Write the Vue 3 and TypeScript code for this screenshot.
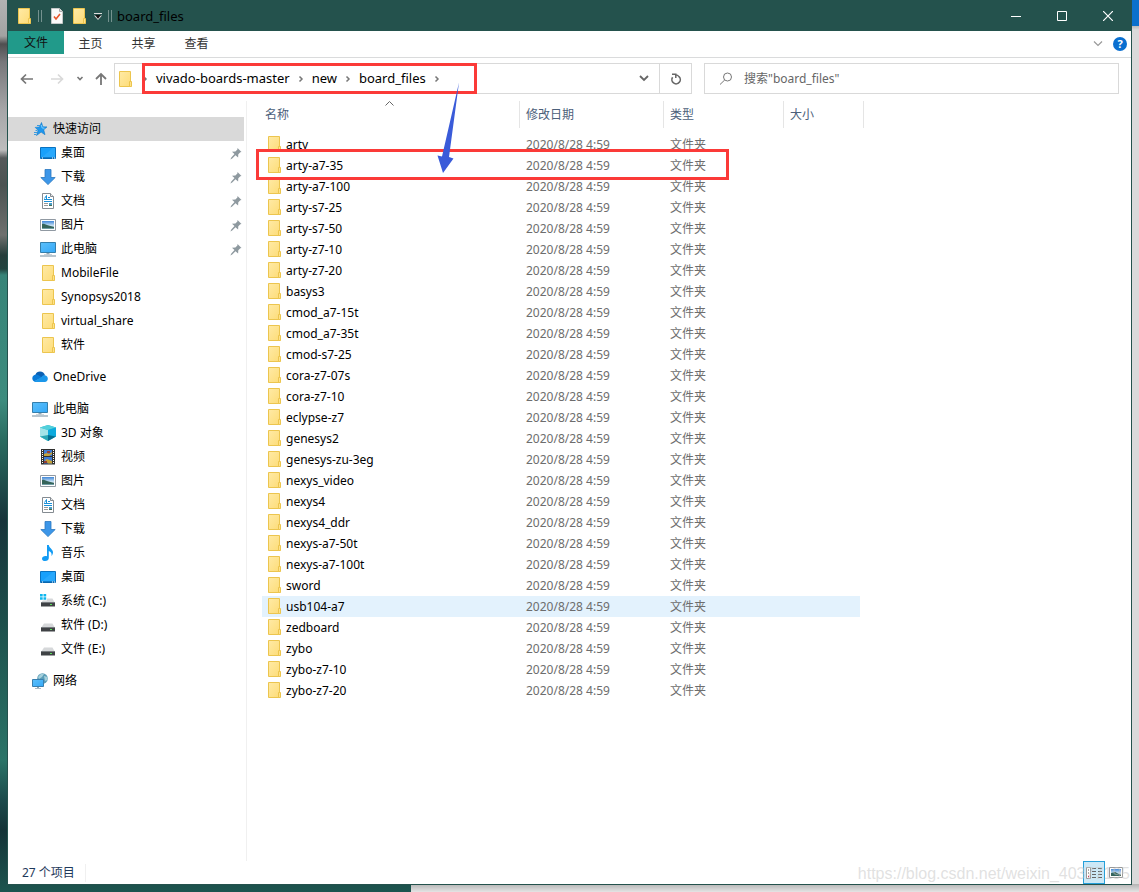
<script setup lang="ts">
import { ref } from 'vue'

interface NavItem {
  label: string
  icon: string
  root?: boolean
  pinned?: boolean
  active?: boolean
}

const navGroups: NavItem[][] = [
  [
    { label: '快速访问', icon: 'star', root: true, active: true },
    { label: '桌面', icon: 'desktop', pinned: true },
    { label: '下载', icon: 'download', pinned: true },
    { label: '文档', icon: 'document', pinned: true },
    { label: '图片', icon: 'picture', pinned: true },
    { label: '此电脑', icon: 'pc', pinned: true },
    { label: 'MobileFile', icon: 'folder' },
    { label: 'Synopsys2018', icon: 'folder' },
    { label: 'virtual_share', icon: 'folder' },
    { label: '软件', icon: 'folder' },
  ],
  [{ label: 'OneDrive', icon: 'cloud', root: true }],
  [
    { label: '此电脑', icon: 'pc', root: true },
    { label: '3D 对象', icon: 'cube' },
    { label: '视频', icon: 'video' },
    { label: '图片', icon: 'picture' },
    { label: '文档', icon: 'document' },
    { label: '下载', icon: 'download' },
    { label: '音乐', icon: 'music' },
    { label: '桌面', icon: 'desktop' },
    { label: '系统 (C:)', icon: 'sysdrive' },
    { label: '软件 (D:)', icon: 'drive' },
    { label: '文件 (E:)', icon: 'drive' },
  ],
  [{ label: '网络', icon: 'network', root: true }],
]

const folders: string[] = [
  'arty', 'arty-a7-35', 'arty-a7-100', 'arty-s7-25', 'arty-s7-50', 'arty-z7-10', 'arty-z7-20',
  'basys3', 'cmod_a7-15t', 'cmod_a7-35t', 'cmod-s7-25', 'cora-z7-07s', 'cora-z7-10', 'eclypse-z7',
  'genesys2', 'genesys-zu-3eg', 'nexys_video', 'nexys4', 'nexys4_ddr', 'nexys-a7-50t',
  'nexys-a7-100t', 'sword', 'usb104-a7', 'zedboard', 'zybo', 'zybo-z7-10', 'zybo-z7-20',
]
const hovered = ref('usb104-a7')
const crumbs = ['vivado-boards-master', 'new', 'board_files']
const query = ref('')
</script>

<template>
  <svg class="defs" aria-hidden="true">
    <defs>
      <linearGradient id="gFolder" x1="0" y1="0" x2="1" y2="1">
        <stop offset="0" stop-color="#ffeaa6" /><stop offset="1" stop-color="#fddc77" />
      </linearGradient>
      <linearGradient id="gBlue" x1="0" y1="0" x2="1" y2="1">
        <stop offset="0" stop-color="#5cc0fb" /><stop offset="1" stop-color="#35a8f7" />
      </linearGradient>
      <linearGradient id="gSky" x1="0" y1="0" x2="0" y2="1">
        <stop offset="0" stop-color="#3f86d8" /><stop offset="0.6" stop-color="#cfe6f5" /><stop offset="1" stop-color="#5d8f95" />
      </linearGradient>
      <symbol id="folder" viewBox="0 0 16 16">
        <path d="M2.500.500h11v12l.500 3H2.500z" fill="url(#gFolder)" stroke="#ecc54e" />
        <path d="M12.500 15.500v-5h2v5z" fill="#ffe28a" stroke="#ecc54e" />
      </symbol>
      <symbol id="star" viewBox="0 0 16 16">
        <path d="M9.500 1.500l1.300 4.300 4.200.1-3.300 2.900 1.300 4.900-3.900-2.600-4.600 3.400 1.600-5.200-2.900-2.900 4.300-.4z" fill="#1f97ee" stroke="#0f78c8" stroke-width=".6" />
        <path d="M5 4.500h3M3 6.500h2M3.500 9.500h2M2 11.500h3M2 13.500h2" stroke="#3a9be0" />
        <path d="M9.200 4l1 3 2.300.2" stroke="#7fd0ff" fill="none" />
      </symbol>
      <symbol id="desktop" viewBox="0 0 16 16">
        <path d="M.5 2.500h15v11H.5z" fill="#18a0fb" stroke="#0a72c0" />
        <path d="M1 13L13 3h2v9H1z" fill="#42b3ff" opacity=".4" />
        <path d="M1 13h14" stroke="#075b9d" /><path d="M2 13h1M12 13h1M14 13h1" stroke="#fff" />
      </symbol>
      <symbol id="download" viewBox="0 0 16 16">
        <path d="M5 .5h6v8h4.200L8 15.600.8 8.500H5z" fill="#3c96e8" stroke="#2877bf" stroke-width=".8" />
      </symbol>
      <symbol id="document" viewBox="0 0 16 16">
        <path d="M2.500.5h8l3 3v12h-11z" fill="#fff" stroke="#848b91" />
        <path d="M10.500.5v3h3" fill="#e8e8e8" stroke="#848b91" />
        <path d="M4 6.500h8M4 8.500h8M8 4.500h2" stroke="#1a90d8" />
        <path d="M4.500 5.500l2-3v4" stroke="#1a90d8" fill="none" />
        <path d="M4 10.500h4M4 12.500h4" stroke="#999" /><path d="M9 10h3v3H9z" fill="#4a9cc4" />
        <path d="M9 12h3v1H9z" fill="#426c56" />
      </symbol>
      <symbol id="picture" viewBox="0 0 16 16">
        <path d="M.5 2.500h15v11H.5z" fill="#fff" stroke="#9099a2" />
        <path d="M2 4h12v8H2z" fill="url(#gSky)" />
        <path d="M2 7c2-.5 3 .5 5 1l7 2V11H2z" fill="#35645a" />
      </symbol>
      <symbol id="pc" viewBox="0 0 16 16">
        <path d="M.5 1.500h15v10H.5z" fill="url(#gBlue)" stroke="#347fac" />
        <path d="M6.500 12h3v1.500h-3z" fill="#95a8b5" /><path d="M4 13h8v.7H4z" fill="#b9c5cc" />
        <path d="M0 15h16" stroke="#8ba1b0" stroke-width="1.200" />
      </symbol>
      <symbol id="cloud" viewBox="0 0 16 16">
        <path d="M3.500 6C4 3.500 6 2.600 8 2.600c2.500 0 4.300 1.400 5 3.700L8 10z" fill="#0b60b3" />
        <path d="M3.800 5.500c-2 .2-3.500 1.700-3.500 3.700 0 1.500.8 2.600 2 3.300l7.700-4-3-2c-1-.7-2-1-3.200-1z" fill="#0a7bd8" />
        <path d="M9.500 8c.8-1.500 2-2 3.300-1.700 2 .4 3 1.800 3 3.400 0 1.800-1.200 3.300-3 3.300H4c-.8 0-1.500-.2-2-.6z" fill="#1b97ea" />
      </symbol>
      <symbol id="cube" viewBox="0 0 16 16">
        <path d="M8 0l8 2.500v9L8 16l-8-4.500v-9z" fill="#27b5cd" />
        <path d="M0 2.500L8 5v11l-8-4.500z" fill="#a4e4e8" /><path d="M8 0l8 2.500L8 5 0 2.500z" fill="#53d0db" />
        <path d="M0 11.500L8 10v6z" fill="#2aa7b5" /><path d="M8 5l8-2.500v9L8 10z" fill="#0daadd" />
        <path d="M8 10l8 1.500L8 16z" fill="#056f92" />
      </symbol>
      <symbol id="video" viewBox="0 0 16 16">
        <path d="M1 0h14v15.500H1z" fill="#30302f" />
        <path d="M4 1h8v6H4zM4 8h8v6.500H4z" fill="#3d7bd4" />
        <path d="M4 5l3-1 2 1 3-2v2l-3 2H4zM5 11l2-1 5 2v2.500H8z" fill="#c5a238" />
        <path d="M7 2h3v2H7zM4 12h3v2H4z" fill="#943d35" />
        <path d="M2.500 1v14M13.500 1v14" stroke="#fff" stroke-dasharray="1 1" />
      </symbol>
      <symbol id="music" viewBox="0 0 16 16">
        <path d="M7 0h1.800c.2 3 4.200 4.200 4.200 7.200 0 1.500-.6 2.700-1.500 3.800.5-3-.6-4.200-2.700-5v7c0 1.800-1.500 3-3.600 3C3.400 16 2 15.200 2 13.700 2 12 3.700 11 5.500 11c.6 0 1.100.1 1.500.3z" fill="#129bf4" />
      </symbol>
      <symbol id="drive" viewBox="0 0 16 16">
        <path d="M4 6.500h8.500L15 11H1z" fill="#d6d8da" /><path d="M1 10.500h14v4H1z" fill="#3f4245" />
        <path d="M1 10.500h14" stroke="#777b7f" /><path d="M10 12.500h2" stroke="#5be05b" stroke-width="1.200" />
      </symbol>
      <symbol id="sysdrive" viewBox="0 0 16 16">
        <path d="M4 5.500h8.500L15 10H1z" fill="#d6d8da" /><path d="M1 9.500h14v4H1z" fill="#3f4245" />
        <path d="M1 9.500h14" stroke="#777b7f" /><path d="M10 11.500h2" stroke="#5be05b" stroke-width="1.200" />
        <path d="M0 1h7v6.500H0z" fill="#fff" />
        <path d="M0 1h2.700v2.500H0zM3.500 1h2.700v2.500H3.500zM0 4.300h2.700v2.500H0zM3.500 4.300h2.700v2.500H3.500z" fill="#0fb6ee" />
      </symbol>
      <symbol id="network" viewBox="0 0 16 16">
        <circle cx="10.500" cy="5.500" r="5.300" fill="#5a9db7" />
        <path d="M6 4c2-3 4-4 6-3l-2 3-3 2zM12 3l3.500 1v3L13 8z" fill="#a5d0dc" />
        <path d="M.5 6.500h11v7H.5z" fill="url(#gBlue)" stroke="#397fae" />
        <path d="M5 14h2v1H5zM3 15h6v.8H3z" fill="#90a5b2" />
      </symbol>
      <symbol id="pin" viewBox="0 0 16 16">
        <path d="M9.500 3l4 4-1.200.3-2 2-.2 3.200-2.600-2.300L4.200 13.500l-1.800 1 .9-2 3.200-3.500L4 6.700l3.400-.2 2-1.900z" fill="#8e999f" />
      </symbol>
      <symbol id="chevron" viewBox="0 0 8 8">
        <path d="M2.500 1.500L5 4 2.500 6.500" fill="none" stroke="#777" stroke-width="1.500" />
      </symbol>
    </defs>
  </svg>

  <div class="wallpaper">
    <div class="behind-right"></div>
    <div class="behind-bottom"></div>
    <main class="window">
      <header class="titlebar">
        <svg class="ico" aria-hidden="true"><use href="#folder" /></svg>
        <span class="bars"></span>
        <button class="bare check" aria-label="属性">
          <svg width="12" height="16" viewBox="0 0 12 16">
            <path d="M.5.5h8l3 3v12H.5z" fill="#fafafa" stroke="#c4c8c8" />
            <path d="M8.500.5v3h3" fill="#ddd" stroke="#aaa" />
            <path d="M3 8.500l2 2.500 4-5" fill="none" stroke="#e8562a" stroke-width="1.600" />
          </svg>
        </button>
        <button class="bare newf" aria-label="新建文件夹"><svg class="ico"><use href="#folder" /></svg></button>
        <button class="bare custom" aria-label="自定义快速访问工具栏">
          <svg width="8" height="7" viewBox="0 0 8 7"><path d="M0 .5h8" stroke="#ddd" /><path d="M0 2.500h8L4 7z" fill="#ddd" /><path d="M1 2h6L4 5.800z" fill="#111" /></svg>
        </button>
        <span class="bars"></span>
        <h1>board_files</h1>
        <div class="winbtns">
          <button aria-label="最小化"><svg width="10" height="10"><path d="M0 5.500h10" stroke="#fff" /></svg></button>
          <button aria-label="最大化"><svg width="10" height="10"><path d="M.5.5h9v9h-9z" fill="none" stroke="#fff" /></svg></button>
          <button aria-label="关闭"><svg width="10" height="10"><path d="M0 0l10 10M10 0L0 10" stroke="#fff" stroke-width="1.200" /></svg></button>
        </div>
      </header>

      <nav class="ribbon">
        <button class="file">文件</button>
        <button>主页</button>
        <button>共享</button>
        <button>查看</button>
        <div class="ribbon-end">
          <button class="bare" aria-label="展开功能区"><svg width="10" height="6"><path d="M1 .5l4 4 4-4" fill="none" stroke="#999" stroke-width="1.200" /></svg></button>
          <button class="help" aria-label="帮助">?</button>
        </div>
      </nav>

      <div class="toolbar">
        <div class="arrows">
          <button class="bare" aria-label="后退"><svg width="14" height="12"><path d="M1.500 6H13M6 1.500L1.500 6 6 10.500" fill="none" stroke="#777" stroke-width="1.700" /></svg></button>
          <button class="bare fwd" aria-label="前进"><svg width="14" height="12"><path d="M1 6h11.500M8 1.500L12.500 6 8 10.500" fill="none" stroke="#d9d9d9" stroke-width="1.700" /></svg></button>
          <button class="bare recent" aria-label="最近浏览的位置"><svg width="8" height="6"><path d="M1.500 1L4 3.500 6.500 1" fill="none" stroke="#777" stroke-width="1.600" /></svg></button>
          <button class="bare up" aria-label="上移"><svg width="12" height="14"><path d="M6 13V2M1 7l5-5 5 5" fill="none" stroke="#777" stroke-width="1.800" /></svg></button>
        </div>
        <div class="address">
          <svg class="ico" aria-hidden="true"><use href="#folder" /></svg>
          <svg class="chev first" aria-hidden="true"><use href="#chevron" /></svg>
          <template v-for="c in crumbs" :key="c">
            <a href="#">{{ c }}</a>
            <svg class="chev" aria-hidden="true"><use href="#chevron" /></svg>
          </template>
          <button class="bare drop" aria-label="以前的位置"><svg width="10" height="7"><path d="M1 1l4 4 4-4" fill="none" stroke="#666" stroke-width="1.800" /></svg></button>
          <button class="refresh" aria-label="刷新">
            <svg width="12" height="12" viewBox="0 0 12 12"><path d="M2.600 4.300A4.200 4.200 0 1 0 9 3.600" fill="none" stroke="#666" stroke-width="1.600" /><path d="M2 1.300h3.800v3.700" fill="none" stroke="#666" stroke-width="1.500" /><path d="M5.500 1.800C7 1.800 8.400 2.600 9.200 3.900" fill="none" stroke="#666" stroke-width="1.200" /></svg>
          </button>
          <div class="mark mark-path"></div>
        </div>
        <label class="search">
          <svg width="14" height="14" viewBox="0 0 14 14"><circle cx="8.500" cy="5" r="4" fill="none" stroke="#777" /><path d="M5.700 8L1 12.500" stroke="#777" /></svg>
          <input v-model="query" type="text" placeholder="搜索&quot;board_files&quot;" aria-label="搜索" />
        </label>
      </div>

      <div class="body">
        <nav class="sidebar">
          <ul v-for="(g, i) in navGroups" :key="i">
            <li v-for="n in g" :key="n.label">
              <a href="#" :class="{ root: n.root, active: n.active }">
                <svg class="ico" aria-hidden="true"><use :href="'#' + n.icon" /></svg>
                <span>{{ n.label }}</span>
                <svg v-if="n.pinned" class="pin" aria-hidden="true"><use href="#pin" /></svg>
              </a>
            </li>
          </ul>
        </nav>
        <section class="files">
          <table>
            <colgroup><col class="c-name" /><col class="c-date" /><col class="c-type" /><col class="c-size" /></colgroup>
            <thead>
              <tr>
                <th scope="col"><div>名称<svg class="sort" width="9" height="5"><path d="M.5 4.500l4-4 4 4" fill="none" stroke="#666" /></svg></div></th>
                <th scope="col"><div>修改日期</div></th>
                <th scope="col"><div>类型</div></th>
                <th scope="col"><div>大小</div></th>
              </tr>
            </thead>
            <tbody>
              <tr v-for="f in folders" :key="f" :class="{ hover: f === hovered }" @mouseenter="hovered = f">
                <td><div class="name"><svg class="ico" aria-hidden="true"><use href="#folder" /></svg>{{ f }}</div></td>
                <td>2020/8/28 4:59</td>
                <td>文件夹</td>
                <td></td>
              </tr>
            </tbody>
          </table>
          <div class="mark mark-row"></div>
          <svg class="arrow" width="24" height="94" aria-hidden="true">
            <path d="M22 2.500L12 77l4.500 1.500L6 93 .5 75.500l4.500 1z" fill="#3a5bd9" />
          </svg>
        </section>
      </div>

      <footer class="status">
        <span class="count">{{ folders.length }} 个项目</span>
        <div class="views">
          <button class="on" aria-label="详细信息">
            <svg width="16" height="12"><path d="M.5.5h4v11h-4z" fill="#fff" stroke="#999" /><path d="M2 3h1M2 6h1" stroke="#555" /><path d="M2 9.500h1" stroke="#c22" stroke-width="1.500" /><path d="M6 1.500h4M6 4.500h4M6 7.500h4M6 10.500h4M12 1.500h4M12 4.500h4M12 7.500h4M12 10.500h4" stroke="#666" /></svg>
          </button>
          <button aria-label="大图标">
            <svg width="14" height="12"><path d="M.5.5h13v10H.5z" fill="#fff" stroke="#999" /><path d="M2 2h10v7H2z" fill="url(#gSky)" /><path d="M2 6l4-1 6 3v1H2z" fill="#35645a" /></svg>
          </button>
        </div>
      </footer>
    </main>
    <div class="watermark">https://blog.csdn.net/weixin_40377195</div>
  </div>
</template>

<style>
html, body { margin: 0; }
</style>

<style scoped>
.defs { position: absolute; width: 0; height: 0; }
.wallpaper {
  position: relative;
  box-sizing: border-box;
  min-height: 100vh;
  padding: 0 7px 7px 7px;
  display: flex;
  overflow: hidden;
  font: 12px/18px "Noto Sans", "Noto Sans CJK SC", sans-serif;
  color: #000;
  background: linear-gradient(180deg, #b3b3b3 0, #a2a2a2 36px, #4f4f50 44px, #77777a 62px, #a6a6a8 110px, #bdbdbd 150px, #55595a 158px, #4b5352 185px, #6e706e 235px, #263e3b 255px, #22443f 269px, #378478 275px, #3d8c7e 400px, #2a6b60 440px, #17343a 520px, #1d4f4b 620px, #2b7468 760px, #1c4a4b 800px, #143337 830px, #1d554f 892px);
}
.behind-right {
  position: absolute; top: 0; right: 0; bottom: 0; width: 8px;
  background: linear-gradient(180deg, #0a70cc 26px, #b9b9b9 26px, #dadada 30px);
}
.behind-bottom {
  position: absolute; left: 411px; right: 0; bottom: 0; height: 8px;
  background: linear-gradient(180deg, #b4b4b4, #e4e4e4);
}
.window {
  position: relative; z-index: 1;
  flex: 1; min-width: 0;
  display: flex; flex-direction: column;
  background: #fff;
  border: 1px solid #24524d; border-top: 0;
}
button { font: inherit; color: inherit; padding: 0; border: 0; background: none; cursor: default; }
.bare { display: flex; align-items: center; justify-content: center; }
a { color: inherit; text-decoration: none; }
.ico { width: 16px; height: 16px; flex: none; }

.titlebar { height: 31px; display: flex; align-items: center; background: #24524d; padding-left: 8px; }
.bars { box-sizing: border-box; width: 4px; height: 12px; border: solid #75928f; border-width: 0 1px; margin-left: 6px; }
.check { margin-left: 9px; }
.newf { margin-left: 8px; }
.custom { margin-left: 7px; padding-top: 2px; }
h1 { margin: 0 0 0 5px; font-size: 13px; font-weight: 400; line-height: 18px; }
.winbtns { margin-left: auto; display: flex; }
.winbtns button { width: 46px; height: 30px; display: flex; align-items: center; justify-content: center; }

.ribbon { display: flex; height: 26px; border-bottom: 1px solid #dadbdc; color: #333; }
.ribbon > button { width: 53px; height: 24px; padding-top: 1px; }
.ribbon > .file { width: 56px; height: 23px; padding: 0; background: #219a8a; color: #111; }
.ribbon-end { margin-left: auto; display: flex; align-items: center; gap: 10px; padding-right: 4px; }
.help { width: 14px; height: 14px; border-radius: 50%; background: #0a6fd0; color: #fff; font-weight: 700; font-size: 11px; line-height: 14px; }

.toolbar { display: flex; align-items: center; padding: 5px 12px 0 12px; height: 31px; }
.arrows { display: flex; align-items: center; width: 94px; }
.fwd { margin-left: 16px; }
.recent { margin-left: 12px; }
.up { margin-left: 11px; }
.address { position: relative; flex: 574 1 0; height: 31px; box-sizing: border-box; border: 1px solid #d9d9d9; display: flex; align-items: center; padding-left: 2px; font-size: 13px; }
.address a { line-height: 18px; padding-bottom: 1px; }
.chev { width: 8px; height: 8px; margin: 0 7px; flex: none; }
.chev.first { margin-left: 8px; }
.drop { margin-left: auto; width: 30px; height: 29px; }
.refresh { width: 32px; height: 29px; border-left: 1px solid #d9d9d9; display: flex; align-items: center; justify-content: center; }
.search { flex: 399 1 0; min-width: 0; margin-left: 12px; height: 31px; box-sizing: border-box; border: 1px solid #d9d9d9; display: flex; align-items: center; gap: 11px; padding-left: 14px; }
.search input { flex: 1; min-width: 0; border: 0; outline: 0; padding: 0; background: none; font: inherit; color: #666; }
.search input::placeholder { color: #666; opacity: 1; }

.body { flex: 1; display: flex; padding-top: 7px; }
.sidebar { width: 238px; border-right: 1px solid #f0f0f0; padding-top: 16px; flex: none; }
ul { list-style: none; margin: 0 2px 8px 0; padding: 0; }
.sidebar a { display: flex; align-items: center; height: 24px; padding-left: 32px; gap: 5px; }
.sidebar a.root { padding-left: 24px; }
.sidebar a.active { background: #d9d9d9; }
.pin { width: 16px; height: 16px; margin-left: auto; }

.files { position: relative; flex: 1; min-width: 0; padding-left: 15px; }
table { border-collapse: separate; border-spacing: 0; table-layout: fixed; width: 602px; }
.c-name { width: 258px; }
.c-date { width: 144px; }
.c-type { width: 120px; }
.c-size { width: 80px; }
th { padding: 0 0 6px; font-weight: 400; text-align: left; color: #4c607a; }
th div { position: relative; height: 27px; line-height: 27px; padding-left: 6px; border-right: 1px solid #e5e5e5; }
th:first-child div { padding-left: 3px; }
.sort { position: absolute; top: 0; left: 50%; margin-left: -6px; }
td { height: 21px; padding: 0 0 0 6px; line-height: 21px; vertical-align: top; color: #6d6d6d; background-clip: padding-box; }
td:first-child { padding-left: 4px; color: #000; }
td:last-child { border-right: 4px solid transparent; }
.name { display: flex; align-items: flex-start; gap: 4px; }
.name .ico { margin-top: 2px; }
tr.hover td { background-color: #e3f2fd; }

.status { display: flex; height: 23px; align-items: center; color: #1e395b; padding: 0 4px 0 14px; }
.count { line-height: 18px; padding-right: 10px; border-right: 1px solid #f0f0f0; }
.views { margin-left: auto; display: flex; }
.views button { width: 22px; height: 23px; display: flex; align-items: center; justify-content: center; }
.views .on { box-sizing: border-box; background: #cce8f6; border: 1px solid #26a0da; }

.mark { position: absolute; box-sizing: border-box; border: 3px solid #fb3a38; pointer-events: none; }
.mark-path { left: 27px; top: -1px; width: 335px; height: 31px; }
.mark-row { left: 9px; top: 48px; width: 473px; height: 31px; }
.arrow { position: absolute; left: 190px; top: -21px; pointer-events: none; z-index: 2; }
.watermark { position: absolute; z-index: 2; right: 9px; bottom: 9px; font: 16px/18px "Liberation Sans", Arial, sans-serif; color: rgba(195, 195, 195, 0.5); pointer-events: none; }
</style>
